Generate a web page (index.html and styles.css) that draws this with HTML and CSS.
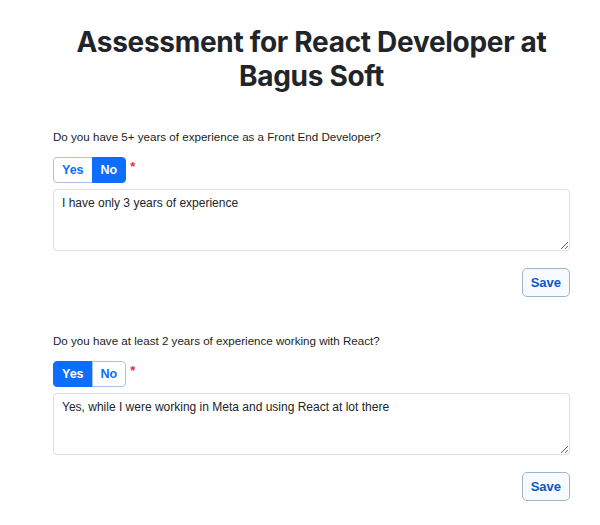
FILE: index.html
```html
<!DOCTYPE html>
<html lang="en">
<head>
<meta charset="utf-8">
<title>Assessment</title>
<link rel="stylesheet" href="styles.css">
</head>
<body>
<main class="page">
  <h1 class="title">Assessment for React Developer at Bagus Soft</h1>

  <section class="question">
    <p class="question-text">Do you have 5+ years of experience as a Front End Developer?</p>
    <div class="choice-row">
      <div class="toggle">
        <button class="toggle-btn">Yes</button>
        <button class="toggle-btn active">No</button>
      </div>
      <span class="required">*</span>
    </div>
    <textarea class="answer">I have only 3 years of experience</textarea>
    <div class="actions"><button class="save">Save</button></div>
  </section>

  <section class="question">
    <p class="question-text">Do you have at least 2 years of experience working with React?</p>
    <div class="choice-row">
      <div class="toggle">
        <button class="toggle-btn active">Yes</button>
        <button class="toggle-btn">No</button>
      </div>
      <span class="required">*</span>
    </div>
    <textarea class="answer">Yes, while I were working in Meta and using React at lot there</textarea>
    <div class="actions"><button class="save">Save</button></div>
  </section>
</main>
</body>
</html>
```

FILE: styles.css
```css
* { box-sizing: border-box; }
html, body { margin: 0; background: #fff; }
body {
  font-family: "Liberation Sans", Arial, sans-serif;
  color: #212529;
}
.page {
  width: 600px;
  padding: 25px 30px 0 53px;
}
.title {
  font-family: Inter, "Liberation Sans", sans-serif;
  font-weight: 700;
  font-size: 28px;
  line-height: 34px;
  letter-spacing: -0.3px;
  text-align: center;
  max-width: 495px;
  margin: 0 auto;
  color: #212529;
}
.question { margin-top: 35px; }
.question + .question { margin-top: 35px; }
.question-text {
  margin: 0;
  font-size: 11.6px;
  line-height: 18px;
  color: #1b1e21;
}
.choice-row {
  display: flex;
  align-items: center;
  margin-top: 11px;
}
.toggle { display: flex; }
.toggle-btn {
  font-family: "Liberation Sans", Arial, sans-serif;
  font-size: 12.5px;
  font-weight: 700;
  height: 26px;
  padding: 0 8px;
  background: #fff;
  color: #0d6efd;
  border: 1px solid #a9c2e6;
  margin: 0;
}
.toggle-btn:first-child { border-radius: 4px 0 0 4px; }
.toggle-btn:last-child { border-radius: 0 4px 4px 0; margin-left: -1px; }
.toggle-btn.active {
  background: #0d6efd;
  border-color: #0d6efd;
  color: #fff;
}
.required {
  color: #e0303f;
  font-size: 13px;
  font-weight: 700;
  margin-left: 4px;
  line-height: 14px;
  position: relative;
  top: -3px;
}
.answer {
  display: block;
  width: 517px;
  height: 62px;
  margin-top: 6px;
  padding: 5px 8px;
  font-family: "Liberation Sans", Arial, sans-serif;
  font-size: 12px;
  line-height: 16px;
  color: #212529;
  border: 1px solid #dcdfe3;
  border-radius: 4px;
  resize: vertical;
}
.actions {
  display: flex;
  justify-content: flex-end;
  width: 517px;
  margin-top: 17px;
}
.save {
  height: 29px;
  padding: 0 8px;
  font-family: "Liberation Sans", Arial, sans-serif;
  font-size: 13px;
  font-weight: 700;
  color: #0a58ca;
  background: #f7fbff;
  border: 1px solid #9fb4cc;
  border-radius: 5px;
}
```
